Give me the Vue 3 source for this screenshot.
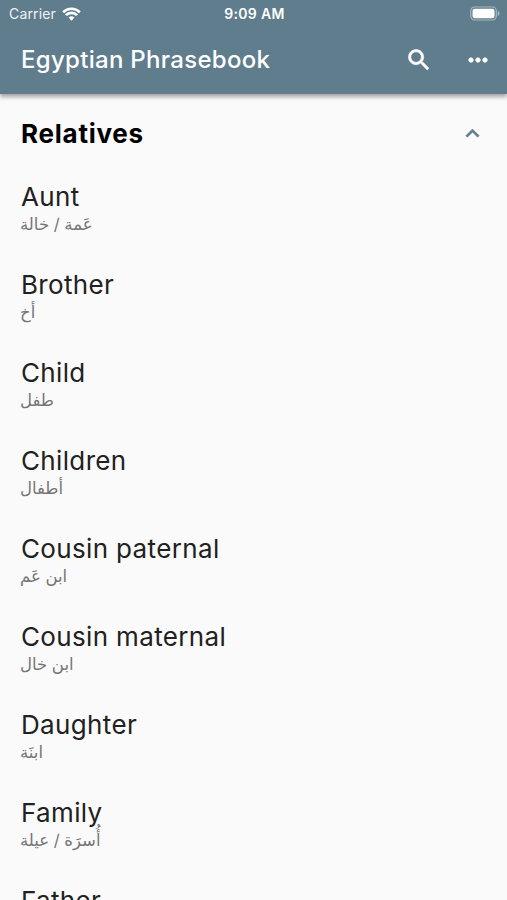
<template>
  <div class="screen">
    <header class="app-bar">
      <!-- Status bar -->
      <div class="status-bar">
        <div class="carrier">
          <span>Carrier</span>
          <svg class="wifi" viewBox="0 0 20 14">
            <path d="M10 14 6.9 10.8a4.4 4.4 0 0 1 6.2 0z" />
            <path d="M4.1 8.2a8.3 8.3 0 0 1 11.8 0M1.2 5.1a12.5 12.5 0 0 1 17.6 0" fill="none" stroke="currentColor" stroke-width="2.8" />
          </svg>
        </div>
        <span class="time">9:09 AM</span>
        <div class="power">
          <svg class="battery" viewBox="0 0 31 15">
            <rect x="0.8" y="0.8" width="26.4" height="13.4" rx="4" fill="none" stroke="currentColor" stroke-width="1.2" opacity="0.45" />
            <rect x="2.6" y="2.6" width="22.8" height="9.8" rx="2.4" />
            <path d="M28.7 5v5c1.1-.5 1.8-1.4 1.8-2.5S29.8 5.500 28.700 5z" opacity="0.5" />
          </svg>
        </div>
      </div>

      <!-- Toolbar -->
      <div class="toolbar">
        <h1 class="title">Egyptian Phrasebook</h1>
        <button class="icon-btn search" aria-label="Search">
          <svg viewBox="0 0 24 24" stroke="currentColor" stroke-width="0.5">
            <path d="M15.5 14h-.79l-.28-.27C15.410 12.590 16 11.110 16 9.500 16 5.910 13.090 3 9.500 3S3 5.910 3 9.500 5.910 16 9.500 16c1.610 0 3.090-.59 4.230-1.570l.27.28v.79l5 4.990L20.490 19l-4.990-5zm-6 0C7.010 14 5 11.990 5 9.500S7.010 5 9.500 5 14 7.010 14 9.500 11.990 14 9.500 14z" />
          </svg>
        </button>
        <button class="icon-btn" aria-label="More">
          <svg viewBox="0 0 24 24" stroke="currentColor" stroke-width="0.5">
            <path d="M6 10c-1.100 0-2 .9-2 2s.9 2 2 2 2-.9 2-2-.9-2-2-2zm12 0c-1.100 0-2 .9-2 2s.9 2 2 2 2-.9 2-2-.9-2-2-2zm-6 0c-1.100 0-2 .9-2 2s.9 2 2 2 2-.9 2-2-.9-2-2-2z" />
          </svg>
        </button>
      </div>
    </header>

    <main>
      <button class="section-header" @click="expanded = !expanded">
        <span>Relatives</span>
        <svg class="chevron" :class="{ collapsed: !expanded }" viewBox="0 0 24 24">
          <path d="M12 8l-6 6 1.410 1.410L12 10.830l4.590 4.580L18 14z" />
        </svg>
      </button>
      <ul v-if="expanded" class="phrases">
        <li v-for="item in phrases" :key="item.english" class="phrase">
          <span class="english">{{ item.english }}</span>
          <span class="arabic" lang="ar">{{ item.arabic }}</span>
        </li>
      </ul>
    </main>
  </div>
</template>

<script setup>
import { ref } from 'vue'

const expanded = ref(true)

const phrases = [
  { english: 'Aunt', arabic: 'عَمة / خالة' },
  { english: 'Brother', arabic: 'أخ' },
  { english: 'Child', arabic: 'طفل' },
  { english: 'Children', arabic: 'أطفال' },
  { english: 'Cousin paternal', arabic: 'ابن عَم' },
  { english: 'Cousin maternal', arabic: 'ابن خال' },
  { english: 'Daughter', arabic: 'ابنَة' },
  { english: 'Family', arabic: 'أُسرَة / عيلة' },
  { english: 'Father', arabic: 'أب' }
]
</script>

<style>
body {
  margin: 0;
  overflow: hidden;
}
</style>

<style scoped>
.screen {
  height: 900px;
  overflow: hidden;
  background: #fafafa;
  font-family: Inter, sans-serif;
  color: #212121;
}

.app-bar {
  position: relative;
  height: 94px;
  background: #607d8d;
  color: #fff;
  box-shadow: 0 3px 4px rgba(0, 0, 0, 0.34);
}

.status-bar {
  height: 27px;
  padding: 0 7px 0 9px;
  display: grid;
  grid-template-columns: 1fr auto 1fr;
  align-items: center;
  font-size: 14px;
}

.carrier {
  display: flex;
  align-items: center;
  gap: 6px;
  color: #eef2f5;
  letter-spacing: 0.15px;
}

.wifi {
  width: 19px;
  height: 14px;
  fill: currentColor;
  color: #fff;
}

.time {
  font-size: 14px;
  font-weight: 600;
  letter-spacing: 0.35px;
}

.power {
  display: flex;
  justify-content: flex-end;
}

.battery {
  width: 30px;
  height: 15px;
  fill: currentColor;
}

.toolbar {
  height: 66px;
  padding: 0 15px 0 21px;
  display: flex;
  align-items: center;
}

.title {
  flex: 1;
  margin: 0;
  font-size: 24px;
  font-weight: 500;
  line-height: 30px;
  letter-spacing: 0.3px;
}

.icon-btn {
  width: 28px;
  height: 28px;
  padding: 0;
  border: 0;
  background: none;
  color: inherit;
}

.icon-btn svg {
  display: block;
  width: 28px;
  height: 28px;
  fill: currentColor;
}

.search {
  margin-right: 31px;
}

.section-header {
  width: 100%;
  height: 78px;
  padding: 0 21px;
  border: 0;
  background: none;
  display: flex;
  align-items: center;
  justify-content: space-between;
  font-family: inherit;
  font-size: 26px;
  font-weight: 700;
  letter-spacing: 0.75px;
  color: #000;
}

.chevron {
  width: 27px;
  height: 27px;
  fill: #607d8d;
  stroke: #607d8d;
  stroke-width: 0.4px;
}

.chevron.collapsed {
  transform: rotate(180deg);
}

.phrases {
  margin: 0;
  padding: 0;
  list-style: none;
}

.phrase {
  height: 88px;
  padding: 9px 21px 0 20px;
  box-sizing: border-box;
  display: flex;
  flex-direction: column;
  align-items: flex-start;
}

.english {
  padding-left: 1px;
  font-size: 26px;
  line-height: 32px;
  letter-spacing: 0.35px;
}

/* Inter has no Arabic, so it only sets the slash and the spaces */
.arabic {
  font-family: Inter, "DejaVu Sans", sans-serif;
  font-size: 16.5px;
  line-height: 22px;
  color: #757575;
}
</style>
